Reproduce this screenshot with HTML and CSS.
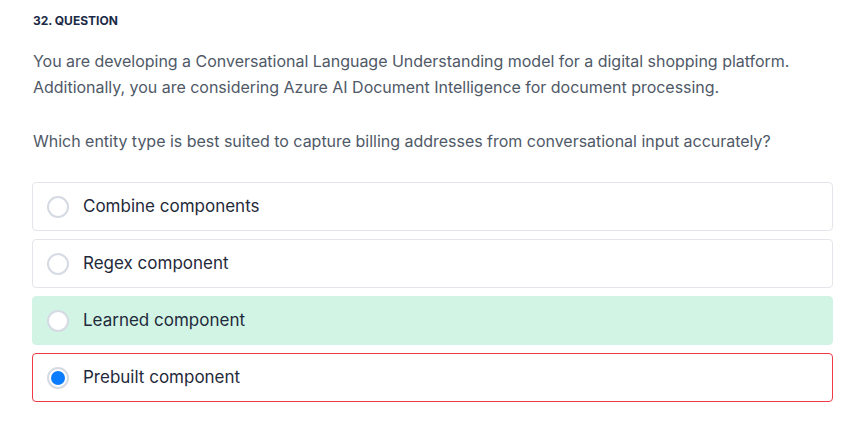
FILE: index.html
```html
<!DOCTYPE html>
<html>
<head>
<meta charset="utf-8">
<link rel="stylesheet" href="styles.css">
</head>
<body>
<div class="quiz">
  <div class="q-label">32. QUESTION</div>
  <p class="q-text">You are developing a Conversational Language Understanding model for a digital shopping platform. Additionally, you are considering Azure AI Document Intelligence for document processing.</p>
  <p class="q-text q-ask">Which entity type is best suited to capture billing addresses from conversational input accurately?</p>
  <div class="options">
    <label class="option"><span class="radio"></span><span class="opt-text">Combine components</span></label>
    <label class="option"><span class="radio"></span><span class="opt-text">Regex component</span></label>
    <label class="option correct"><span class="radio"></span><span class="opt-text">Learned component</span></label>
    <label class="option wrong"><span class="radio checked"></span><span class="opt-text">Prebuilt component</span></label>
  </div>
</div>
</body>
</html>
```

FILE: styles.css
```css
html, body {
  margin: 0;
  padding: 0;
  background: #ffffff;
}
body {
  font-family: Inter, "Noto Sans", sans-serif;
}
.quiz {
  padding: 12px 14px 0 32px;
}
.q-label {
  font-size: 12px;
  font-weight: 700;
  color: #1b2a47;
  line-height: 17px;
  padding-left: 1px;
}
.q-text {
  margin: 0;
  padding-left: 1px;
  font-size: 16px;
  line-height: 26px;
  color: #4f5967;
  letter-spacing: -0.02px;
}
.q-text:first-of-type {
  margin-top: 19px;
}
.q-ask {
  margin-top: 28px;
}
.options {
  display: flex;
  flex-direction: column;
  gap: 8px;
  margin-top: 28px;
}
.option {
  display: flex;
  align-items: center;
  height: 49px;
  box-sizing: border-box;
  border: 1px solid #e4e5ea;
  border-radius: 4px;
  padding-left: 14px;
  background: #fff;
}
.option.correct {
  background: #d2f4e5;
  border-color: #d2f4e5;
}
.option.wrong {
  border-color: #ee3b47;
}
.radio {
  width: 18px;
  height: 18px;
  border: 2px solid #d5dae3;
  border-radius: 50%;
  background: #fff;
  flex: none;
  position: relative;
}
.radio.checked::after {
  content: "";
  position: absolute;
  left: 2px;
  top: 2px;
  width: 14px;
  height: 14px;
  border-radius: 50%;
  background: #0a7cff;
}
.opt-text {
  margin-left: 14px;
  font-size: 17px;
  line-height: 24px;
  margin-top: -1px;
  color: #1f2a3a;
}
```
